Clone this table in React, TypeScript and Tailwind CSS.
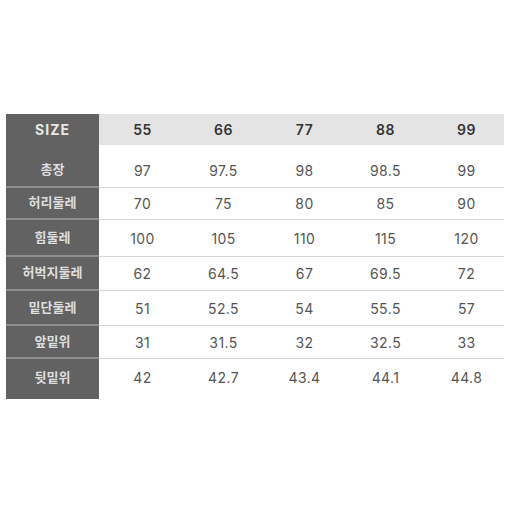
const SIZES = ['55', '66', '77', '88', '99'];

const ROWS: Array<{ label: string; values: string[]; h: string; pad?: string }> = [
  { label: '총장', values: ['97', '97.5', '98', '98.5', '99'], h: 'h-[43px]', pad: 'pt-[9px]' },
  { label: '허리둘레', values: ['70', '75', '80', '85', '90'], h: 'h-[32px]' },
  { label: '힘둘레', values: ['100', '105', '110', '115', '120'], h: 'h-[37px]' },
  { label: '허벅지둘레', values: ['62', '64.5', '67', '69.5', '72'], h: 'h-[34px]' },
  { label: '밑단둘레', values: ['51', '52.5', '54', '55.5', '57'], h: 'h-[35px]' },
  { label: '앞밑위', values: ['31', '31.5', '32', '32.5', '33'], h: 'h-[33px]' },
  { label: '뒷밑위', values: ['42', '42.7', '43.4', '44.1', '44.8'], h: 'h-[40px]', pad: 'pb-[3px]' },
];

const font = { fontFamily: 'Inter, "Noto Sans CJK KR", sans-serif' };

export default function App() {
  return (
    <div className="h-[510px] w-[510px] bg-white pl-[6px] pt-[114px]" style={font}>
      <div className="w-[498px]">
        {/* header */}
        <div className="flex h-[31px]">
          <div className="flex w-[93px] items-center justify-center bg-[#626262] text-[14px] font-bold tracking-[1px] text-[#e8e8e8]">
            SIZE
          </div>
          <div className="flex w-[405px] bg-[#e4e4e4]">
            {SIZES.map((s) => (
              <div
                key={s}
                className="flex w-[81px] items-center justify-center pl-[6px] text-[14px] font-semibold tracking-[0.5px] text-[#333]"
              >
                {s}
              </div>
            ))}
          </div>
        </div>
        {ROWS.map((row, i) => {
          const last = i === ROWS.length - 1;
          return (
            <div key={row.label} className={`flex ${row.h}`}>
              <div
                className={`flex w-[93px] items-center justify-center bg-[#626262] text-[13px] font-bold text-[#dedede] ${row.pad ?? ''} ${
                  last ? '' : 'border-b-2 border-[#8e8e8e]'
                }`}
              >
                {row.label}
              </div>
              <div className={`flex w-[405px] ${last ? '' : 'border-b border-[#d6d6d6]'} ${row.pad ?? ''}`}>
                {row.values.map((v, j) => (
                  <div
                    key={j}
                    className="flex w-[81px] items-center justify-center pl-[6px] text-[14px] tracking-[0.4px] text-[#555]"
                  >
                    {v}
                  </div>
                ))}
              </div>
            </div>
          );
        })}
      </div>
    </div>
  );
}
